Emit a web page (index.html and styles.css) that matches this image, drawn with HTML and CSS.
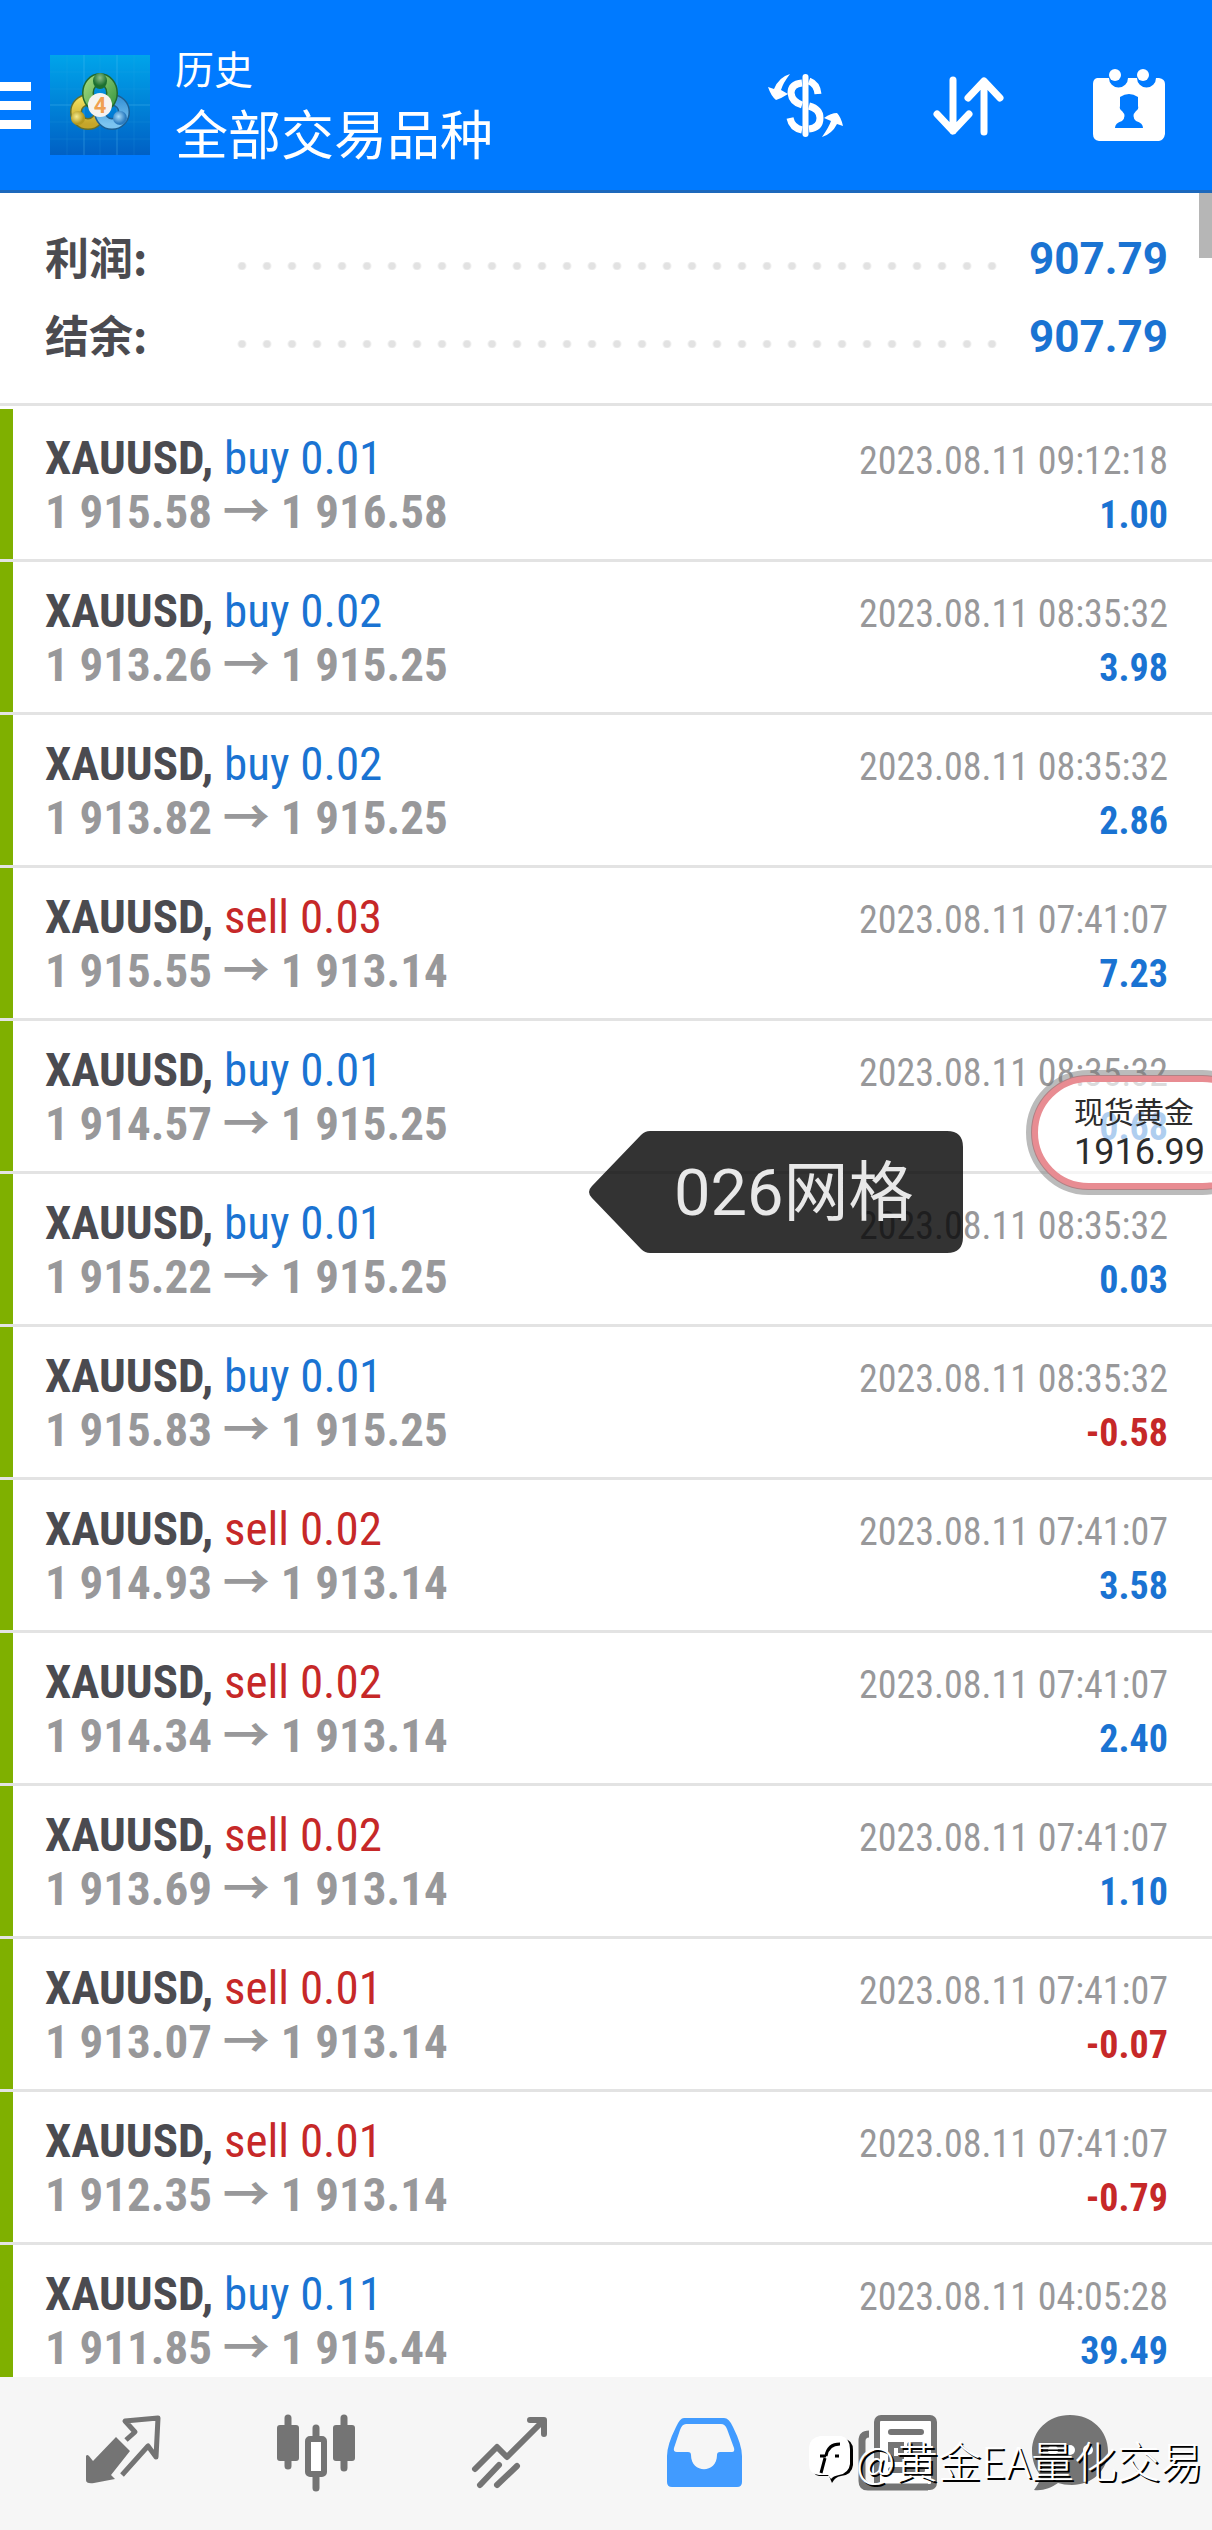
FILE: index.html
```html
<!DOCTYPE html>
<html lang="zh-CN">
<head>
<meta charset="utf-8">
<meta name="viewport" content="width=device-width, initial-scale=1">
<title>历史</title>
<link rel="stylesheet" href="styles.css">
</head>
<body>
<div class="app">
  <header class="topbar">
    <button class="menu" type="button" aria-label="菜单"><span></span><span></span><span></span></button>
    <svg class="logo" viewBox="0 0 100 100" aria-hidden="true">
      <defs>
        <linearGradient id="sky" x1="0" y1="0" x2="0" y2="1"><stop offset="0" stop-color="#00a4ea"/><stop offset=".5" stop-color="#0083d8"/><stop offset="1" stop-color="#0060c4"/></linearGradient>
        <linearGradient id="green" x1="0" y1="0" x2="1" y2="1"><stop offset="0" stop-color="#9bd57a"/><stop offset="1" stop-color="#3f9b45"/></linearGradient>
        <linearGradient id="gold" x1="0" y1="0" x2="0" y2="1"><stop offset="0" stop-color="#f0dc5a"/><stop offset="1" stop-color="#c4a52a"/></linearGradient>
        <linearGradient id="aqua" x1="0" y1="0" x2="0" y2="1"><stop offset="0" stop-color="#3c96d8"/><stop offset="1" stop-color="#7cc4f0"/></linearGradient>
        <radialGradient id="greenBall" cx=".5" cy=".3"><stop offset="0" stop-color="#8cc08a"/><stop offset="1" stop-color="#1c7030"/></radialGradient>
        <radialGradient id="goldBall" cx=".4" cy=".4"><stop offset="0" stop-color="#f6ec90"/><stop offset="1" stop-color="#b59a20"/></radialGradient>
        <radialGradient id="aquaBall" cx=".4" cy=".4"><stop offset="0" stop-color="#a8dcfa"/><stop offset="1" stop-color="#2c7cc0"/></radialGradient>
      </defs>
      <rect width="100" height="100" fill="url(#sky)"/>
      <path d="M0 17H100M0 34H100M0 67H100M0 84H100M17 0V100M50 0V100M84 0V100" stroke="#38b0ee" stroke-opacity=".15"/>
      <path d="M0 50H100M34 0V100M67 0V100" stroke="#5cc4f4" stroke-opacity=".35"/>
      <g fill="none" stroke-width="9">
        <circle cx="38" cy="57" r="12" stroke="#66702a" stroke-width="12"/><circle cx="38" cy="57" r="12" stroke="url(#gold)"/>
        <circle cx="62" cy="57" r="12" stroke="#1d5f92" stroke-width="12"/><circle cx="62" cy="57" r="12" stroke="url(#aqua)"/>
        <ellipse cx="50" cy="38" rx="12" ry="14" stroke="#22692f" stroke-width="12"/><ellipse cx="50" cy="38" rx="12" ry="14" stroke="url(#green)"/>
      </g>
      <ellipse cx="50" cy="26" rx="7" ry="8" fill="url(#greenBall)"/>
      <circle cx="28" cy="63" r="7" fill="url(#goldBall)"/>
      <circle cx="70" cy="63" r="7" fill="url(#aquaBall)"/>
      <circle cx="50" cy="50" r="12" fill="#f6f3f0"/>
      <text x="50" y="58" class="logo-digit">4</text>
    </svg>
    <div class="titles">
      <p class="section">历史</p>
      <h1 class="scope">全部交易品种</h1>
    </div>
    <div class="actions">
      <button type="button" aria-label="品种">
        <svg width="80" height="70" viewBox="0 0 80 70">
          <g fill="none" stroke="#fff" stroke-width="7">
            <path d="M36 13Q25 14 25 23Q26 32 36 35M43 11Q51 14 52 24M24 48Q26 58 36 60M43 36Q54 39 54 48Q54 58 43 59"/>
            <path d="M39.500 7V64" stroke-width="6" stroke-linecap="round"/>
          </g>
          <path d="M24 4Q17 13 15 20L22 24Q16 28 10 30Q5 26 2 17L8 19Q13 7 24 4ZM56 67Q63 57 65 51L58 48Q65 43 71 43Q75 47 77 56L71 54Q66 64 56 67Z" fill="#fff"/>
        </svg>
      </button>
      <button type="button" aria-label="排序">
        <svg width="80" height="70" viewBox="0 0 80 70"><path d="M26 10V61M10 44L26 61L42 44M57 62V11M41 28L57 11L73 28" fill="none" stroke="#fff" stroke-width="7" stroke-linecap="round" stroke-linejoin="round"/></svg>
      </button>
      <button type="button" aria-label="日期">
        <svg width="80" height="80" viewBox="0 4 80 80">
          <path d="M9 17H21A9 9 0 0 0 40 17H49A9 9 0 0 0 68 17H71Q77 18 77 23V73Q76 79 71 80H11Q5 79 5 73V23Q5 18 9 17Z" fill="#fff"/>
          <circle cx="27" cy="14" r="6" fill="#fff"/><circle cx="55" cy="14" r="6" fill="#fff"/>
          <path d="M32 36Q41 30 50 36V45Q51 48 48 50Q43 55 48 60Q55 62 55 67H27Q27 62 34 60Q39 55 34 50Q31 48 32 45Z" fill="#007aff"/>
        </svg>
      </button>
    </div>
  </header>

  <main class="content">
    <dl class="summary">
      <div class="total"><dt>利润:</dt><span class="leader"></span><dd>907.79</dd></div>
      <div class="total"><dt>结余:</dt><span class="leader"></span><dd>907.79</dd></div>
    </dl>
    <ul class="deals">
      <li class="deal"><div class="info"><p class="name"><b>XAUUSD,</b> <span class="up">buy 0.01</span></p><p class="prices">1 915.58 <i>→</i> 1 916.58</p></div><div class="result"><time>2023.08.11 09:12:18</time><p class="up">1.00</p></div></li>
      <li class="deal"><div class="info"><p class="name"><b>XAUUSD,</b> <span class="up">buy 0.02</span></p><p class="prices">1 913.26 <i>→</i> 1 915.25</p></div><div class="result"><time>2023.08.11 08:35:32</time><p class="up">3.98</p></div></li>
      <li class="deal"><div class="info"><p class="name"><b>XAUUSD,</b> <span class="up">buy 0.02</span></p><p class="prices">1 913.82 <i>→</i> 1 915.25</p></div><div class="result"><time>2023.08.11 08:35:32</time><p class="up">2.86</p></div></li>
      <li class="deal"><div class="info"><p class="name"><b>XAUUSD,</b> <span class="down">sell 0.03</span></p><p class="prices">1 915.55 <i>→</i> 1 913.14</p></div><div class="result"><time>2023.08.11 07:41:07</time><p class="up">7.23</p></div></li>
      <li class="deal"><div class="info"><p class="name"><b>XAUUSD,</b> <span class="up">buy 0.01</span></p><p class="prices">1 914.57 <i>→</i> 1 915.25</p></div><div class="result"><time>2023.08.11 08:35:32</time><p class="up">0.68</p></div></li>
      <li class="deal"><div class="info"><p class="name"><b>XAUUSD,</b> <span class="up">buy 0.01</span></p><p class="prices">1 915.22 <i>→</i> 1 915.25</p></div><div class="result"><time>2023.08.11 08:35:32</time><p class="up">0.03</p></div></li>
      <li class="deal"><div class="info"><p class="name"><b>XAUUSD,</b> <span class="up">buy 0.01</span></p><p class="prices">1 915.83 <i>→</i> 1 915.25</p></div><div class="result"><time>2023.08.11 08:35:32</time><p class="down">-0.58</p></div></li>
      <li class="deal"><div class="info"><p class="name"><b>XAUUSD,</b> <span class="down">sell 0.02</span></p><p class="prices">1 914.93 <i>→</i> 1 913.14</p></div><div class="result"><time>2023.08.11 07:41:07</time><p class="up">3.58</p></div></li>
      <li class="deal"><div class="info"><p class="name"><b>XAUUSD,</b> <span class="down">sell 0.02</span></p><p class="prices">1 914.34 <i>→</i> 1 913.14</p></div><div class="result"><time>2023.08.11 07:41:07</time><p class="up">2.40</p></div></li>
      <li class="deal"><div class="info"><p class="name"><b>XAUUSD,</b> <span class="down">sell 0.02</span></p><p class="prices">1 913.69 <i>→</i> 1 913.14</p></div><div class="result"><time>2023.08.11 07:41:07</time><p class="up">1.10</p></div></li>
      <li class="deal"><div class="info"><p class="name"><b>XAUUSD,</b> <span class="down">sell 0.01</span></p><p class="prices">1 913.07 <i>→</i> 1 913.14</p></div><div class="result"><time>2023.08.11 07:41:07</time><p class="down">-0.07</p></div></li>
      <li class="deal"><div class="info"><p class="name"><b>XAUUSD,</b> <span class="down">sell 0.01</span></p><p class="prices">1 912.35 <i>→</i> 1 913.14</p></div><div class="result"><time>2023.08.11 07:41:07</time><p class="down">-0.79</p></div></li>
      <li class="deal"><div class="info"><p class="name"><b>XAUUSD,</b> <span class="up">buy 0.11</span></p><p class="prices">1 911.85 <i>→</i> 1 915.44</p></div><div class="result"><time>2023.08.11 04:05:28</time><p class="up">39.49</p></div></li>
    </ul>
    <div class="scroll-thumb"></div>
  </main>

  <nav class="tabs">
    <a href="#quotes" aria-label="行情"><svg width="80" height="80" viewBox="0 0 80 80"><path d="M34 23L48 37L29 61L33 65L12 69Q4 70 4 66V42Q5 40 7 42L11 47Z" fill="#747474"/><path d="M44 26L53 18L43 7L76 4L74 43L66 32L40 61" fill="none" stroke="#747474" stroke-width="5" stroke-linejoin="round"/></svg></a>
    <a href="#charts" aria-label="图表"><svg width="80" height="80" viewBox="0 0 80 80"><g fill="none" stroke="#747474" stroke-width="7" stroke-linecap="round"><path d="M12 4V52M68 4V54M40 14V24M40 62V74"/></g><rect x="1" y="11" width="22" height="36" rx="3" fill="#747474"/><rect x="57" y="11" width="22" height="36" rx="3" fill="#747474"/><rect x="32" y="25" width="16" height="35" rx="2" fill="#fff" stroke="#747474" stroke-width="6"/></svg></a>
    <a href="#trade" aria-label="交易"><svg width="80" height="80" viewBox="0 0 80 80"><g fill="none" stroke="#747474" stroke-width="6" stroke-linecap="round"><path d="M5 55L27 33L37 43L73 7" stroke-linejoin="round"/><path d="M60 6H74V20" stroke-linejoin="round"/><path d="M10 71L29 51M27 71L47 52"/></g></svg></a>
    <a href="#history" aria-label="历史" aria-current="page"><svg width="80" height="80" viewBox="0 0 80 80"><path fill-rule="evenodd" d="M20 4H60Q65 4 69 13Q78 31 78 42V68Q78 73 73 73H8Q3 73 3 68V42Q3 31 12 13Q16 4 20 4ZM22 10Q18 10 16 16L10 34Q9 38 13 38H24Q27 38 27 41C27 60 53 60 53 41Q53 38 56 38H68Q71 38 70 34L63 15Q61 10 57 10Z" fill="#419bff"/></svg></a>
    <a href="#news" aria-label="新闻"><svg width="80" height="80" viewBox="0 0 80 80"><rect x="19" y="4" width="57" height="69" rx="4" fill="#fff" stroke="#747474" stroke-width="6"/><path d="M11 20Q4 20 4 27V67Q4 73 10 73H70" fill="none" stroke="#747474" stroke-width="7"/><path d="M33 18H63M33 31H43V45H33ZM52 31H64M52 40H64M33 56H64" fill="none" stroke="#747474" stroke-width="6" stroke-linecap="round"/></svg></a>
    <a href="#chat" aria-label="消息"><svg width="80" height="80" viewBox="0 0 80 80"><path d="M40 1C62 1 78 17 78 37C78 57 61 71 42 71C36 71 32 70 28 69C21 74 13 77 4 76C7 72 10 67 11 62C5 55 2 46 2 37C2 17 18 1 40 1Z" fill="#747474"/><circle cx="23" cy="36" r="5" fill="#fff"/><circle cx="40" cy="36" r="5" fill="#fff"/><circle cx="58" cy="36" r="5" fill="#fff"/></svg></a>
  </nav>

  <aside class="tag">
    <svg class="tag-shape" viewBox="0 0 374 122" aria-hidden="true"><path d="M61 0H358Q374 0 374 16V106Q374 122 358 122H61Q56 122 52 118L3 67Q-3 61 3 55L52 4Q56 0 61 0Z"/></svg>
    <span class="tag-text">026网格</span>
  </aside>
  <aside class="quote"><span class="quote-name">现货黄金</span><span class="quote-price">1916.99</span></aside>
  <p class="watermark">
    <svg width="44" height="50" viewBox="0 0 44 50" aria-hidden="true"><path d="M12 5H35Q44 6 44 16V31Q43 41 32 42Q26 43 23 49L20 42H10Q2 40 2 31V15Q3 7 12 5Z" fill="#000"/><path d="M11 2H32Q41 4 41 15V30Q40 39 30 41Q24 42 22 45L19 41H10Q0 40 0 31V13Q1 4 11 2Z" fill="#fff"/><path d="M12 39L16 24M11 22H17M17 22Q19 10 31 10M26 22H30" fill="none" stroke="#000" stroke-width="3"/></svg>
    <span>@黄金EA量化交易</span>
  </p>
</div>
</body>
</html>
```
FILE: styles.css
```css
* { box-sizing: border-box; margin: 0; padding: 0; }

body {
  font-family: Roboto, "Noto Sans CJK SC", sans-serif;
  background: #fff;
  color: #4b4b50;
}

button { border: 0; background: none; }

.app {
  position: relative;
  display: flex;
  flex-direction: column;
  height: 100vh;
  overflow: hidden;
}

/* Top bar */
.topbar {
  display: flex;
  align-items: center;
  height: 193px;
  padding: 20px 44px 0 0;
  background: #007aff;
  border-bottom: 3px solid #1c68bc;
  color: #fff;
}

.menu {
  display: flex;
  flex-direction: column;
  gap: 10px;
  width: 31px;
}
.menu span { height: 9px; background: #fff; }

.logo { width: 100px; height: 100px; margin: 0 25px 0 19px; }
.logo-digit {
  font: bold 22px Roboto, sans-serif;
  text-anchor: middle;
  fill: #f0a050;
}

.titles { flex: 1; padding-top: 3px; }
.section { font-size: 39px; line-height: 60px; }
.scope { font-size: 53px; line-height: 72px; font-weight: 400; }

.actions { display: flex; align-items: center; gap: 81px; }
.actions svg { display: block; }

/* Totals */
.content {
  position: relative;
  flex: 1;
  min-height: 0;
  overflow: hidden;
}

.summary {
  padding: 27px 44px 27px 45px;
  border-bottom: 3px solid #e3e3e3;
}
.total {
  display: flex;
  align-items: center;
  height: 78px;
  font-size: 44px;
  line-height: 64px;
  font-weight: 700;
}
.total dt { width: 190px; padding-bottom: 6px; font-family: "Noto Sans CJK SC", sans-serif; }
.total dd { color: #1a73d2; }
.leader {
  flex: 1;
  height: 8px;
  margin: 14px 29px 0 0;
  background: radial-gradient(circle at 7px 4px, #e2e2e2 3px, transparent 5px) 0 0 / 25px 8px repeat-x;
}

/* Deals */
.deals { list-style: none; padding-top: 3px; }
.deal {
  display: flex;
  justify-content: space-between;
  height: 153px;
  padding: 22px 44px 0 45px;
  border-bottom: 3px solid #e3e3e3;
  background: linear-gradient(#7fb000, #7fb000) 0 0 / 13px 100% no-repeat padding-box;
  font-family: "Roboto Condensed", Roboto, sans-serif;
  line-height: 54px;
}
.name, .prices { font-size: 47px; }
.prices { color: #98989a; font-weight: 700; white-space: pre; }
.prices i { font-family: "Noto Sans CJK SC", sans-serif; font-style: normal; line-height: 0; }
.result { padding-top: 3px; font-size: 38px; text-align: right; }
.result time { display: block; color: #98989a; }
.result p { font-weight: 700; }
.up { color: #1a73d2; }
.down { color: #c62828; }

.scroll-thumb {
  position: absolute;
  top: 0;
  right: 0;
  width: 13px;
  height: 65px;
  background: #b6b6b6;
}

/* Bottom tabs */
.tabs {
  display: grid;
  grid-template-columns: repeat(5, 194fr) 150fr;
  justify-items: center;
  align-items: center;
  height: 153px;
  padding: 0 67px 0 25px;
  background: #f6f6f6;
}
.tabs svg { display: block; }

/* Floating layers */
.tag {
  position: absolute;
  top: 1131px;
  right: 249px;
  display: flex;
  align-items: center;
  width: 374px;
  height: 122px;
  padding: 0 0 10px 85px;
}
.tag-shape { position: absolute; inset: 0; fill: rgba(0, 0, 0, .8); }
.tag-text { position: relative; font-size: 65px; color: #e8e8e8; white-space: nowrap; }

.quote {
  position: absolute;
  top: 1075px;
  right: -48px;
  display: flex;
  flex-direction: column;
  justify-content: center;
  width: 229px;
  height: 115px;
  padding-left: 36px;
  border: 7px solid #e88c92;
  border-radius: 58px;
  outline: 6px solid rgba(120, 120, 120, .5);
  outline-offset: -1px;
  background: rgba(255, 255, 255, .65);
  color: #2c2c2c;
}
.quote-name { font-size: 30px; line-height: 38px; }
.quote-price { font-size: 36px; line-height: 40px; }

.watermark {
  position: absolute;
  right: 9px;
  bottom: 41px;
  display: flex;
  align-items: center;
  gap: 3px;
  font: 300 43px/60px "Noto Sans CJK SC", sans-serif;
  color: #fff;
  text-shadow: 2px 2px 0 #000;
  white-space: nowrap;
}
```
